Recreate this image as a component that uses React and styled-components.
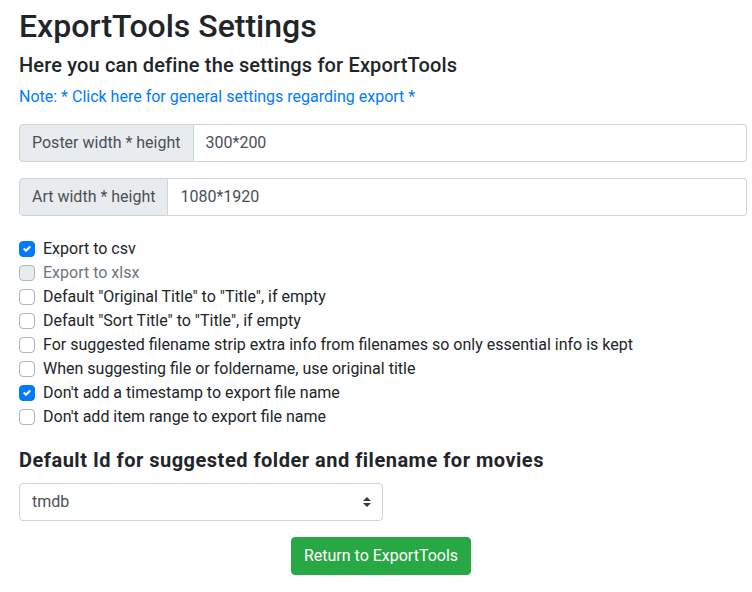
import React from "react";
import styled, { createGlobalStyle } from "styled-components";

const GlobalStyle = createGlobalStyle`
  *, *::before, *::after { box-sizing: border-box; }
  body {
    margin: 0;
    background: #fff;
    color: #212529;
    font-family: Roboto, "Open Sans", sans-serif;
    font-size: 16px;
    line-height: 1.5;
  }
`;

const Page = styled.div`
  padding: 7px 5px 16px 19px;
  display: flex;
  flex-direction: column;
`;

const Title = styled.h1`
  margin: 0 0 8px;
  font-size: 32px;
  font-weight: 500;
  line-height: 1.2;
  color: #212529;
`;

const Subtitle = styled.h5`
  margin: 0 0 ${p => p.$mb || 8}px;
  font-size: 20px;
  font-weight: ${p => (p.$bold ? 700 : 500)};
  line-height: 24px;
  letter-spacing: ${p => (p.$bold ? "0.5px" : "0.15px")};
  color: #212529;
`;

const NoteLink = styled.a`
  display: block;
  color: #007bff;
  text-decoration: none;
  line-height: 24px;
  margin-bottom: 14.6px;
  cursor: pointer;
`;

const InputGroup = styled.div`
  display: flex;
  align-items: stretch;
  height: 38px;
  margin-bottom: 16px;
`;

const Prepend = styled.span`
  display: flex;
  align-items: center;
  padding: 6px 12px;
  background: #e9ecef;
  border: 1px solid #ced4da;
  border-radius: 4px 0 0 4px;
  color: #495057;
  white-space: nowrap;
  line-height: 24px;
`;

const TextInput = styled.input`
  flex: 1;
  min-width: 0;
  padding: 6px 12px;
  border: 1px solid #ced4da;
  border-left: none;
  border-radius: 0 4px 4px 0;
  font: inherit;
  line-height: 24px;
  color: #495057;
  background: #fff;
  outline: none;
`;

const CheckList = styled.div`
  display: flex;
  flex-direction: column;
  margin-top: 5px;
  margin-bottom: 19px;
`;

const CheckRow = styled.label`
  position: relative;
  display: flex;
  align-items: flex-start;
  min-height: 24px;
  padding-left: 24px;
  line-height: 24px;
  color: ${p => (p.$disabled ? "#6c757d" : "#212529")};
  white-space: nowrap;
`;

const Box = styled.span`
  position: absolute;
  left: 0;
  top: 4px;
  width: 16px;
  height: 16px;
  border-radius: 4px;
  border: 1px solid ${p => (p.$checked ? "#007bff" : "#adb5bd")};
  background: ${p => (p.$checked ? "#007bff" : p.$disabled ? "#e9ecef" : "#fff")};
  display: flex;
  align-items: center;
  justify-content: center;
`;

const SelectWrap = styled.div`
  position: relative;
  width: 364px;
  height: 38px;
  margin-top: 3px;
  margin-bottom: 16px;
`;

const Select = styled.select`
  width: 100%;
  height: 38px;
  padding: 6px 28px 6px 12px;
  border: 1px solid #ced4da;
  border-radius: 4px;
  background: #fff;
  color: #495057;
  font: inherit;
  line-height: 24px;
  appearance: none;
  -webkit-appearance: none;
  outline: none;
`;

const Arrows = styled.svg`
  position: absolute;
  right: 12px;
  top: 14px;
  pointer-events: none;
`;

const ButtonRow = styled.div`
  display: flex;
  justify-content: center;
  padding-right: 4px;
`;

const Button = styled.button`
  height: 38px;
  padding: 6px 12px;
  border: 1px solid #28a745;
  border-radius: 4px;
  background: #28a745;
  color: #fff;
  font: inherit;
  line-height: 24px;
  cursor: pointer;
`;

const Check = () => (
  <svg width="8" height="8" viewBox="0 0 8 8">
    <path fill="#fff" d="M6.564.75l-3.59 3.612-1.538-1.55L0 4.26l2.974 2.99L8 2.193z" />
  </svg>
);

const options = [
  { label: "Export to csv", checked: true },
  { label: "Export to xlsx", disabled: true },
  { label: 'Default "Original Title" to "Title", if empty' },
  { label: 'Default "Sort Title" to "Title", if empty' },
  { label: "For suggested filename strip extra info from filenames so only essential info is kept" },
  { label: "When suggesting file or foldername, use original title" },
  { label: "Don't add a timestamp to export file name", checked: true },
  { label: "Don't add item range to export file name" },
];

export default function App() {
  return (
    <>
      <GlobalStyle />
      <Page>
        <Title>ExportTools Settings</Title>
        <Subtitle>Here you can define the settings for ExportTools</Subtitle>
        <NoteLink>Note: * Click here for general settings regarding export *</NoteLink>

        <InputGroup>
          <Prepend>Poster width * height</Prepend>
          <TextInput defaultValue="300*200" />
        </InputGroup>
        <InputGroup>
          <Prepend>Art width * height</Prepend>
          <TextInput defaultValue="1080*1920" />
        </InputGroup>

        <CheckList>
          {options.map(o => (
            <CheckRow key={o.label} $disabled={o.disabled}>
              <Box $checked={o.checked} $disabled={o.disabled}>
                {o.checked && <Check />}
              </Box>
              {o.label}
            </CheckRow>
          ))}
        </CheckList>

        <Subtitle $bold $mb={8}>Default Id for suggested folder and filename for movies</Subtitle>
        <SelectWrap>
          <Select defaultValue="tmdb">
            <option value="tmdb">tmdb</option>
            <option value="imdb">imdb</option>
            <option value="tvdb">tvdb</option>
          </Select>
          <Arrows width="8" height="10" viewBox="0 0 4 5">
            <path fill="#343a40" d="M2 0L0 2h4zm0 5L0 3h4z" />
          </Arrows>
        </SelectWrap>

        <ButtonRow>
          <Button>Return to ExportTools</Button>
        </ButtonRow>
      </Page>
    </>
  );
}
